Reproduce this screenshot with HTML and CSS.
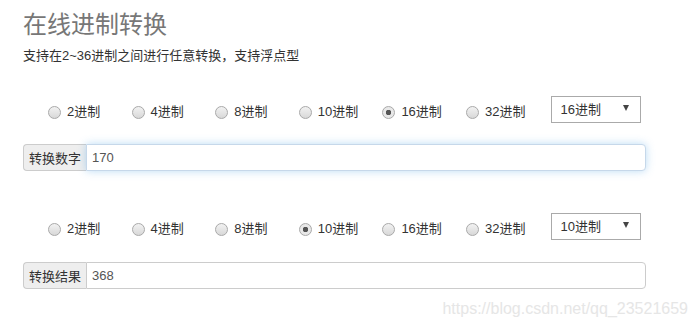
FILE: index.html
```html
<!DOCTYPE html>
<html lang="zh-CN">
<head>
    <meta charset="UTF-8">
    <meta name="viewport" content="width=device-width, initial-scale=1.0">
    <title>在线进制转换</title>
    <link rel="stylesheet" href="styles.css">
</head>
<body>
    <div class="page">
        <h1 class="title">在线进制转换</h1>
        <p class="desc">支持在2~36进制之间进行任意转换，支持浮点型</p>

        <div class="block block-from">
            <div class="radix-row">
                <label class="radix"><input type="radio" name="from">2进制</label>
                <label class="radix"><input type="radio" name="from">4进制</label>
                <label class="radix"><input type="radio" name="from">8进制</label>
                <label class="radix"><input type="radio" name="from">10进制</label>
                <label class="radix"><input type="radio" name="from" checked>16进制</label>
                <label class="radix"><input type="radio" name="from">32进制</label>
                <div class="select"><span>16进制</span><i class="caret"></i></div>
            </div>
            <div class="input-group">
                <span class="addon">转换数字</span>
                <input type="text" class="field focused" value="170">
            </div>
        </div>

        <div class="block block-to">
            <div class="radix-row">
                <label class="radix"><input type="radio" name="to">2进制</label>
                <label class="radix"><input type="radio" name="to">4进制</label>
                <label class="radix"><input type="radio" name="to">8进制</label>
                <label class="radix"><input type="radio" name="to" checked>10进制</label>
                <label class="radix"><input type="radio" name="to">16进制</label>
                <label class="radix"><input type="radio" name="to">32进制</label>
                <div class="select"><span>10进制</span><i class="caret"></i></div>
            </div>
            <div class="input-group">
                <span class="addon">转换结果</span>
                <input type="text" class="field" value="368">
            </div>
        </div>

        <div class="watermark">https://blog.csdn.net/qq_23521659</div>
    </div>
</body>
</html>
```

FILE: styles.css
```css
* { margin: 0; padding: 0; box-sizing: border-box; }
html, body { width: 100%; height: 100%; overflow: hidden; background: #fff; }
body {
    font-family: "Liberation Sans", "Noto Sans CJK SC", Arial, sans-serif;
    font-size: 13px;
    color: #333;
}
.page {
    position: relative;
    width: 698px;
    height: 323px;
    padding: 8px 52px 0 23px;
}
.title {
    font-size: 24px;
    font-weight: normal;
    color: #777;
    line-height: 34px;
}
.desc {
    margin-top: 5px;
    line-height: 18px;
}
.block-from { margin-top: 31px; }
.block-to { margin-top: 42px; }
.radix-row {
    display: flex;
    align-items: center;
    height: 27px;
    padding-left: 25px;
}
.radix {
    display: flex;
    align-items: center;
    width: 83.6px;
    padding-top: 5px;
    line-height: 18px;
    color: #333;
}
.radix input {
    appearance: none;
    -webkit-appearance: none;
    width: 13px;
    height: 13px;
    margin-right: 6px;
    border: 1px solid #a9a9a9;
    border-radius: 50%;
    background: linear-gradient(#f2f2f2, #d8d8d8);
}
.radix input:checked {
    background: radial-gradient(circle, #555 0, #555 2.5px, #e8e8e8 3px);
}
.select {
    display: flex;
    align-items: center;
    justify-content: space-between;
    width: 90px;
    height: 27px;
    margin-left: 1px;
    padding: 0 11px 0 9px;
    border: 1px solid #aaa;
    background: #fff;
    color: #333;
}
.select span { padding-bottom: 3px; }
.caret {
    width: 0;
    height: 0;
    border-left: 3px solid transparent;
    border-right: 3px solid transparent;
    border-top: 6px solid #444;
    margin-bottom: 3px;
}
.input-group {
    display: flex;
    height: 27px;
    margin-top: 21px;
    width: 623px;
}
.block-to .input-group { margin-top: 22px; }
.addon {
    display: flex;
    align-items: center;
    padding: 0 5px;
    width: 63px;
    background: #eee;
    border: 1px solid #ccc;
    border-right: none;
    border-radius: 4px 0 0 4px;
    color: #333;
    font-size: 13px;
}
.field {
    flex: 1;
    border: 1px solid #ccc;
    border-radius: 0 4px 4px 0;
    padding: 0 5px;
    font-family: inherit;
    font-size: 13px;
    color: #555;
    outline: none;
}
.field.focused {
    border-color: #c6d8ea;
    box-shadow: 0 0 8px rgba(102, 175, 233, 0.45);
}
.watermark {
    position: absolute;
    right: 10px;
    bottom: 5px;
    font-size: 16px;
    color: #e6e6e6;
}
```
